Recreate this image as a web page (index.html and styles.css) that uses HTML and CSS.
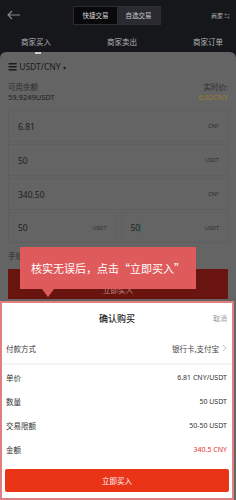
FILE: index.html
```html
<!DOCTYPE html>
<html lang="zh">
<head>
<meta charset="utf-8">
<link rel="stylesheet" href="styles.css">
</head>
<body>
<div class="app">
  <header class="topbar">
    <svg class="back" width="14" height="10" viewBox="0 0 14 10"><path d="M5 1 L1 5 L5 9 M1 5 H13" fill="none" stroke="#8a8b90" stroke-width="1.1"/></svg>
    <div class="seg">
      <span class="seg-item on">快捷交易</span>
      <span class="seg-item">自选交易</span>
    </div>
    <div class="merchant">商家 <span class="mico">⇆</span></div>
  </header>
  <nav class="tabs">
    <span class="tab active">商家买入</span>
    <span class="tab">商家卖出</span>
    <span class="tab">商家订单</span>
  </nav>
  <main class="sheet">
    <div class="pair">☰ USDT/CNY <span class="caret">▾</span></div>
    <div class="balance">
      <div class="col">
        <span class="lbl">可用余额</span>
        <span class="val">59.9249USDT</span>
      </div>
      <div class="col right">
        <span class="lbl">实时价:</span>
        <span class="val gold">6.82CNY</span>
      </div>
    </div>
    <div class="field"><span class="v">6.81</span><span class="u">CNY</span></div>
    <div class="field"><span class="v">50</span><span class="u">USDT</span></div>
    <div class="field"><span class="v">340.50</span><span class="u">CNY</span></div>
    <div class="pairfields">
      <div class="field"><span class="v">50</span><span class="u">USDT</span></div>
      <div class="field"><span class="v">50<i class="cursor"></i></span><span class="u">USDT</span></div>
    </div>
    <div class="fee">手续费</div>
    <div class="buybtn">立即买入</div>
  </main>

  <div class="tip">核实无误后，点击“立即买入”</div>

  <section class="modal">
    <div class="mhead"><span class="mtitle">确认购买</span><span class="cancel">取消</span></div>
    <div class="row pay"><span>付款方式</span><span class="pv">银行卡,支付宝 <svg width="5" height="8" viewBox="0 0 5 8"><path d="M1 1 L4 4 L1 7" fill="none" stroke="#bbb" stroke-width="0.9"/></svg></span></div>
    <div class="sep"></div>
    <div class="details">
      <div class="row"><span>单价</span><span class="rv">6.81 CNY/USDT</span></div>
      <div class="row"><span>数量</span><span class="rv">50 USDT</span></div>
      <div class="row"><span>交易限额</span><span class="rv">50-50 USDT</span></div>
      <div class="row"><span>金额</span><span class="rv red">340.5 CNY</span></div>
    </div>
    <div class="confirm">立即买入</div>
  </section>
</div>
</body>
</html>
```
FILE: styles.css
```css
* { box-sizing: border-box; margin: 0; padding: 0; }
html, body { width: 236px; height: 500px; overflow: hidden; }
body { background: #16171b; font-family: "Noto Sans CJK SC", "Noto Sans", sans-serif; }
.app { position: relative; width: 236px; height: 500px; display: flex; flex-direction: column; }

.topbar { height: 30px; display: flex; align-items: center; padding: 0 6px 0 7px; background: #16171b; position: relative; }
.back { flex: none; }
.seg { display: flex; margin-left: 52px; height: 19px; border: 1px solid #2c2d32; }
.seg-item { width: 43px; display: flex; align-items: center; justify-content: center; font-size: 6.5px; color: #c9c9cc; background: #2a2b30; }
.seg-item.on { background: #09090b; color: #d6d6d8; }
.merchant { margin-left: auto; font-size: 6px; color: #b9b9bd; display: flex; align-items: center; gap: 1px; }
.mico { font-size: 6px; color: #77787c; }

.tabs { height: 22px; display: flex; justify-content: space-between; padding: 0 13px 0 21px; align-items: center; position: relative; }
.tab { font-size: 7.5px; color: #b4b4b8; position: relative; }
.tab.active::after { content: ""; position: absolute; left: 14px; bottom: -7px; width: 6px; height: 1.5px; background: #d0d0d0; }

.sheet { flex: 1; background: #646464; border-radius: 6px 6px 0 0; padding: 7px 8px 0; display: flex; flex-direction: column; }
.pair { font-size: 8.5px; color: #1c1c1c; height: 16px; line-height: 16px; font-family: "Noto Sans", sans-serif; }
.caret { font-size: 6px; }
.balance { display: flex; justify-content: space-between; margin-top: 7px; height: 22px; }
.col { display: flex; flex-direction: column; font-size: 7.5px; line-height: 10px; }
.col.right { align-items: flex-end; }
.lbl { color: #2e2e2e; }
.val { color: #202020; font-family: "Noto Sans", sans-serif; font-size: 7.5px; }
.gold { color: #9b7b31; }

.field { height: 32px; border: 1px solid #5e5e5e; display: flex; align-items: center; justify-content: space-between; padding: 0 8px 0 9px; margin-top: 2px; }
.balance + .field { margin-top: 6px; }
.v { font-size: 8.5px; color: #1e1e1e; font-family: "Noto Sans", sans-serif; display: flex; align-items: center; }
.u { font-size: 5.5px; color: #2c2c2c; font-family: "Noto Sans", sans-serif; }
.cursor { display: inline-block; width: 1px; height: 10px; background: #1f6b6b; margin-left: 0; }
.pairfields { display: flex; gap: 5px; margin-top: 2px; }
.pairfields .field { flex: 1; margin-top: 0; height: 31px; }
.fee { font-size: 7.5px; color: #2a2a2a; margin-top: 8px; height: 10px; line-height: 10px; }
.buybtn { margin-top: 8px; height: 30px; background: #6a1410; color: #b88a88; font-size: 7.5px; display: flex; align-items: flex-end; justify-content: center; padding-bottom: 4px; }

.tip { position: absolute; left: 20px; top: 247px; width: 176px; height: 42px; background: #df5b5b; color: #fff; font-size: 11px; display: flex; align-items: center; justify-content: center; }
.tip::after { content: ""; position: absolute; left: 22px; bottom: -8px; border-left: 6px solid transparent; border-right: 6px solid transparent; border-top: 8px solid #df5b5b; }

.modal { position: absolute; left: 0; top: 301px; width: 234px; height: 199px; background: #fff; border: 2px solid #e07f82; display: flex; flex-direction: column; }
.mhead { height: 30px; display: flex; align-items: center; justify-content: center; position: relative; }
.mtitle { font-size: 9px; color: #222; font-weight: 500; }
.cancel { position: absolute; right: 5px; font-size: 7px; color: #9a9a9a; }
.row { display: flex; justify-content: space-between; align-items: center; padding: 0 5px 0 4px; font-size: 7.5px; color: #333; }
.pay { height: 30px; }
.pv { display: flex; align-items: center; gap: 3px; color: #444; }
.sep { height: 2px; background: #f3f3f3; }
.details { display: flex; flex-direction: column; }
.details .row { height: 24px; }
.rv { font-family: "Noto Sans", sans-serif; font-size: 7px; color: #333; }
.red { color: #e5302a; }
.confirm { margin: 8px 3px 0 3px; height: 23px; background: #ea3418; color: #fff; font-size: 7.5px; display: flex; align-items: center; justify-content: center; border-radius: 2px; }
```
